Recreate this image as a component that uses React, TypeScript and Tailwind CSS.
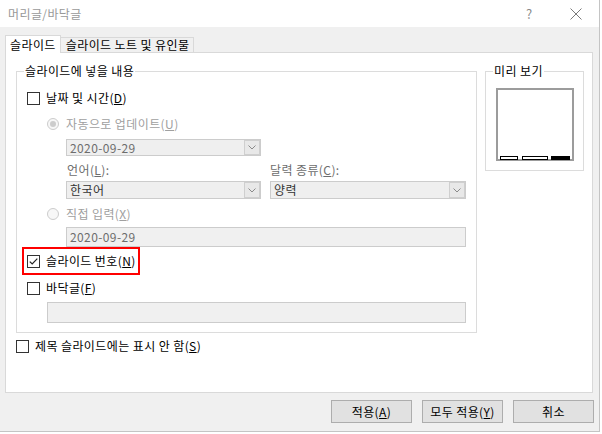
import React from "react";

const Check = ({ checked }: { checked?: boolean }) => (
  <span className="w-[13px] h-[13px] border border-[#333333] bg-white flex items-center justify-center shrink-0">
    {checked && (
      <svg width="11" height="11" viewBox="0 0 11 11">
        <path d="M1.8 5.6 L4.2 8 L9.3 2.6" stroke="#222" strokeWidth="1.2" fill="none" />
      </svg>
    )}
  </span>
);

const Radio = ({ checked }: { checked?: boolean }) => (
  <span className="w-[12px] h-[12px] rounded-full border border-[#cccccc] bg-[#f7f7f7] flex items-center justify-center shrink-0">
    {checked && <span className="w-[6px] h-[6px] rounded-full bg-[#cccccc]" />}
  </span>
);

const Chevron = () => (
  <svg width="8" height="5" viewBox="0 0 8 5">
    <path d="M0.5 0.5 L4 4 L7.5 0.5" stroke="#8a8a8a" strokeWidth="1" fill="none" />
  </svg>
);

const Combo = ({ text, w, h, color }: { text: string; w: string; h: string; color: string }) => (
  <div className={`${w} ${h} border border-[#cccccc] bg-[#efefef] flex items-stretch`}>
    <span className={`flex-1 pl-[3px] flex items-center ${color}`}>{text}</span>
    <span className="w-[16px] border border-[#cfcfcf] bg-[#e8e8e8] flex items-center justify-center m-0">
      <Chevron />
    </span>
  </div>
);

export default function App() {
  return (
    <div className="w-[602px] h-[434px] bg-white font-['Noto_Sans_CJK_KR',sans-serif] text-[12px] tracking-[0.4px] text-black leading-none">
      <div className="w-[600px] h-[432px] bg-[#f0f0f0] border-r border-b border-[#c4c4c4] flex flex-col">
        {/* Title bar */}
        <div className="h-[27px] bg-white flex items-center pl-[8px] shrink-0">
          <span className="text-[#999999] text-[12px]">머리글/바닥글</span>
          <span className="ml-auto text-[#8a8a8a] text-[13px] w-[8px] mr-[36px]">?</span>
          <svg width="12" height="12" viewBox="0 0 12 12" className="mr-[17px]">
            <path d="M0.5 0.5 L11.5 11.5 M11.5 0.5 L0.5 11.5" stroke="#7a7a7a" strokeWidth="1" />
          </svg>
        </div>

        {/* Tabs */}
        <div className="flex items-end pl-[5px] mt-[8px] h-[17px] shrink-0">
          <div className="relative z-10 h-[18px] mb-[-1px] border border-b-0 border-[#d9d9d9] bg-white px-[4px] flex items-center">
            슬라이드
          </div>
          <div className="h-[15px] border border-l-0 border-b-0 border-[#d9d9d9] bg-[#f0f0f0] pl-[5px] pr-[4px] flex items-center">
            슬라이드 노트 및 유인물
          </div>
        </div>

        {/* Panel */}
        <div className="ml-[5px] w-[588px] h-[341px] bg-white border border-[#d9d9d9] pl-[10px] pt-[18px] shrink-0">
          <div className="flex">
            {/* Group 1 */}
            <div className="relative w-[461px] h-[262px] border border-[#dcdcdc] flex flex-col pl-[10px]">
              <span className="absolute left-[7px] top-[-7px] bg-white px-[1px]">슬라이드에 넣을 내용</span>

              <div className="mt-[16px] h-[20px] flex items-center gap-[6px]">
                <Check />
                <span>
                  날짜 및 시간(<u>D</u>)
                </span>
              </div>

              <div className="mt-[6px] h-[20px] flex items-center gap-[7px] pl-[20px] text-[#a0a0a0]">
                <Radio checked />
                <span>
                  자동으로 업데이트(<u>U</u>)
                </span>
              </div>

              <div className="mt-[5px] pl-[39px]">
                <Combo text="2020-09-29" w="w-[195px]" h="h-[17px]" color="text-[#6d6d6d]" />
              </div>

              <div className="mt-[6px] h-[16px] flex items-center pl-[40px] text-[#6d6d6d]">
                <span className="w-[203px]">
                  언어(<u>L</u>):
                </span>
                <span>
                  달력 종류(<u>C</u>):
                </span>
              </div>

              <div className="mt-[3px] pl-[39px] flex gap-[9px]">
                <Combo text="한국어" w="w-[195px]" h="h-[18px]" color="text-[#333333]" />
                <Combo text="양력" w="w-[196px]" h="h-[18px]" color="text-[#333333]" />
              </div>

              <div className="mt-[5px] h-[20px] flex items-center gap-[7px] pl-[20px] text-[#a0a0a0]">
                <Radio />
                <span>
                  직접 입력(<u>X</u>)
                </span>
              </div>

              <div className="mt-[3px] pl-[39px]">
                <div className="w-[400px] h-[20px] border border-[#cccccc] bg-[#f0f0f0] flex items-center pl-[3px] text-[#6d6d6d]">
                  2020-09-29
                </div>
              </div>

              <div className="ml-[-5px] w-[118px] h-[28px] border-2 border-[#ff0000] flex items-center gap-[6px] pl-[3px]">
                <Check checked />
                <span>
                  슬라이드 번호(<u>N</u>)
                </span>
              </div>

              <div className="mt-[3px] h-[20px] flex items-center gap-[6px]">
                <Check />
                <span>
                  바닥글(<u>F</u>)
                </span>
              </div>

              <div className="mt-[4px] pl-[20px]">
                <div className="w-[419px] h-[21px] border border-[#cccccc] bg-[#f0f0f0]" />
              </div>
            </div>

            {/* Preview group */}
            <div className="relative ml-[8px] w-[99px] h-[100px] border border-[#dcdcdc] pl-[10px] pt-[16px]">
              <span className="absolute left-[7px] top-[-7px] bg-white px-[1px]">미리 보기</span>
              <svg width="78" height="73" viewBox="0 0 78 73">
                <rect x="1" y="1" width="76" height="71" fill="white" stroke="#9c9c9c" strokeWidth="2" />
                <rect x="4.5" y="68.5" width="17" height="3" fill="white" stroke="#000" strokeWidth="1" />
                <rect x="26.5" y="68.5" width="25" height="3" fill="white" stroke="#000" strokeWidth="1" />
                <rect x="55" y="68" width="19" height="4" fill="#000" />
              </svg>
            </div>
          </div>

          <div className="mt-[3px] h-[20px] flex items-center gap-[6px]">
            <Check />
            <span>
              제목 슬라이드에는 표시 안 함(<u>S</u>)
            </span>
          </div>
        </div>

        {/* Buttons */}
        <div className="mt-[7px] flex pl-[331px] gap-[10px]">
          <button className="w-[81px] h-[23px] bg-[#e1e1e1] border border-[#adadad] flex items-center justify-center">
            적용(<u>A</u>)
          </button>
          <button className="w-[81px] h-[23px] bg-[#e1e1e1] border border-[#adadad] flex items-center justify-center">
            모두 적용(<u>Y</u>)
          </button>
          <button className="w-[81px] h-[23px] bg-[#e1e1e1] border border-[#adadad] flex items-center justify-center">
            취소
          </button>
        </div>
      </div>
    </div>
  );
}
